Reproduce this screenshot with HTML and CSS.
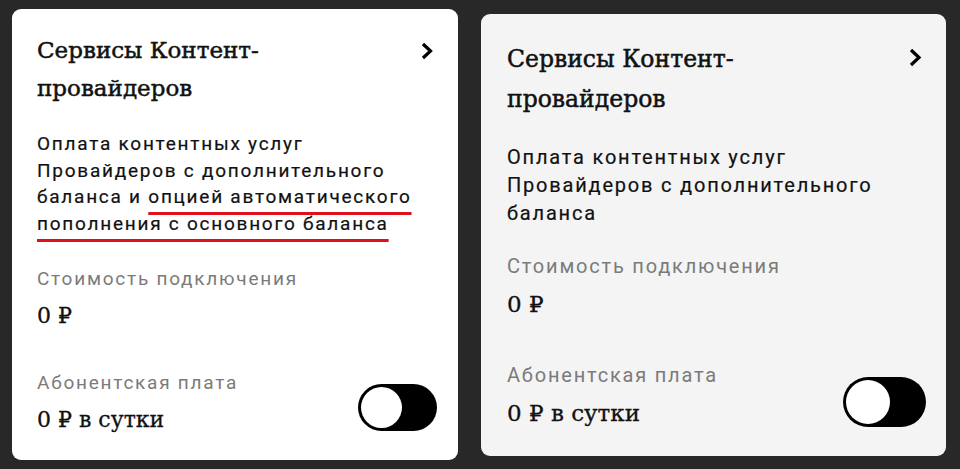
FILE: index.html
```html
<!DOCTYPE html>
<html lang="ru">
<head>
    <meta charset="UTF-8">
    <meta name="viewport" content="width=device-width, initial-scale=1.0">
    <title>Сервисы Контент-провайдеров</title>
    <link rel="stylesheet" href="styles.css">
</head>
<body>
    <main class="cards">
        <section class="card">
            <header class="card-head">
                <h2 class="card-title">Сервисы Контент-провайдеров</h2>
                <svg class="chevron" width="12" height="18" viewBox="0 0 12 18" aria-hidden="true">
                    <polyline points="2,2 9.5,9 2,16" fill="none" stroke="#000" stroke-width="3.2" stroke-linejoin="miter"/>
                </svg>
            </header>
            <p class="card-text">Оплата контентных услуг Провайдеров с дополнительного баланса и <span class="mark">опцией автоматического пополнения с основного баланса</span></p>
            <div class="price price-first">
                <div class="price-label">Стоимость подключения</div>
                <div class="price-value">0 ₽</div>
            </div>
            <div class="price-row">
                <div class="price">
                    <div class="price-label">Абонентская плата</div>
                    <div class="price-value">0 ₽ в сутки</div>
                </div>
                <span class="toggle"><span class="toggle-knob"></span></span>
            </div>
        </section>

        <section class="card card-muted">
            <header class="card-head">
                <h2 class="card-title">Сервисы Контент-провайдеров</h2>
                <svg class="chevron" width="13" height="19" viewBox="0 0 13 19" aria-hidden="true">
                    <polyline points="2,2 10,9.5 2,17" fill="none" stroke="#000" stroke-width="3.2" stroke-linejoin="miter"/>
                </svg>
            </header>
            <p class="card-text">Оплата контентных услуг Провайдеров с дополнительного баланса</p>
            <div class="price price-first">
                <div class="price-label">Стоимость подключения</div>
                <div class="price-value">0 ₽</div>
            </div>
            <div class="price-row">
                <div class="price">
                    <div class="price-label">Абонентская плата</div>
                    <div class="price-value">0 ₽ в сутки</div>
                </div>
                <span class="toggle"><span class="toggle-knob"></span></span>
            </div>
        </section>
    </main>
</body>
</html>
```
FILE: styles.css
```css
body {
    margin: 0;
    background-color: #282828;
    font-family: Roboto, "Liberation Sans", sans-serif;
    color: #111;
}
.cards {
    display: flex;
    align-items: flex-start;
    gap: 23px;
    padding: 9px 0 0 12px;
}
.card {
    box-sizing: border-box;
    width: 446px;
    padding: 22px 21px 25px 25px;
    background-color: #fff;
    border-radius: 9px;
}
.card-head {
    display: flex;
    justify-content: space-between;
    align-items: flex-start;
}
.card-title {
    max-width: 300px;
    margin: 0;
    font-family: "DejaVu Serif", serif;
    font-weight: normal;
    font-size: 23px;
    line-height: 38px;
    -webkit-text-stroke: 0.5px currentColor;
}
.chevron {
    margin: 11px 4px 0 0;
}
.card-text {
    max-width: 390px;
    margin: 24px 0 0;
    font-size: 19px;
    line-height: 26.7px;
    letter-spacing: 1.75px;
    -webkit-text-stroke: 0.2px currentColor;
}
.mark {
    text-decoration: underline;
    text-decoration-color: #e0101c;
    text-decoration-thickness: 3px;
    text-underline-offset: 9px;
    text-decoration-skip-ink: none;
}
.price-first {
    margin-top: 29px;
}
.price-label {
    font-size: 19px;
    line-height: 24px;
    letter-spacing: 1.75px;
    color: #7b7b7b;
}
.price-value {
    margin-top: 10px;
    font-family: "DejaVu Serif", serif;
    font-size: 22px;
    line-height: 30px;
    -webkit-text-stroke: 0.3px currentColor;
}
.price-row {
    display: flex;
    justify-content: space-between;
    align-items: flex-end;
    margin-top: 40px;
}
.toggle {
    box-sizing: border-box;
    display: flex;
    width: 79px;
    height: 47px;
    margin-bottom: 4px;
    padding: 3px;
    background-color: #000;
    border-radius: 24px;
}
.toggle-knob {
    width: 41px;
    height: 41px;
    background-color: #fff;
    border-radius: 50%;
}

/* second card: grey, slightly larger scale */
.card-muted {
    width: 465px;
    margin-top: 5px;
    padding: 25px 20px 27px 26px;
    background-color: #f4f4f4;
}
.card-muted .card-title {
    font-size: 23.5px;
    line-height: 40px;
}
.card-muted .chevron {
    margin-top: 9px;
}
.card-muted .card-text {
    font-size: 20px;
    line-height: 28px;
    letter-spacing: 1.8px;
}
.card-muted .price-first {
    margin-top: 27px;
}
.card-muted .price-label {
    font-size: 20px;
    line-height: 25px;
    letter-spacing: 1.8px;
}
.card-muted .price-value {
    font-size: 23px;
    line-height: 31px;
}
.card-muted .price-row {
    margin-top: 43px;
}
.card-muted .toggle {
    width: 83px;
    height: 50px;
    margin-bottom: 2px;
    border-radius: 25px;
}
.card-muted .toggle-knob {
    width: 44px;
    height: 44px;
}
```
